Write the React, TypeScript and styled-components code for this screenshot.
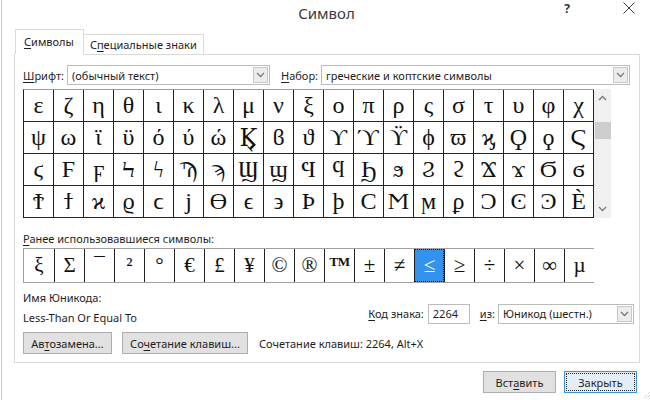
import styled, { createGlobalStyle } from 'styled-components';

const GlobalStyle = createGlobalStyle`
  html, body {
    margin: 0;
    padding: 0;
    background: #fff;
  }
  body {
    font-family: "Noto Sans", "Open Sans", sans-serif;
    font-size: 11px;
    color: #1e1e1e;
  }
  * {
    box-sizing: border-box;
  }
`;

const gridChars = Array.from({ length: 76 }, (_, i) => String.fromCodePoint(0x3b5 + i));
const recentChars = ['ξ', 'Σ', '¯', '²', '°', '€', '£', '¥', '©', '®', '™', '±', '≠', '≤', '≥', '÷', '×', '∞', 'µ'];
const SELECTED_RECENT = 13;

const Screen = styled.div`
  width: 650px;
  height: 400px;
  overflow: hidden;
  background: #fff;
`;

const Frame = styled.div`
  position: relative;
  width: 650px;
  height: 400px;
  margin-left: 1px;
  border-left: 1px solid #c9c9c9;
`;

const TitleBar = styled.div`
  display: grid;
  grid-template-columns: 1fr auto 1fr;
  height: 29px;
`;

const Title = styled.div`
  grid-column: 2;
  font-size: 15px;
  line-height: 26px;
  color: #3a3a3a;
`;

const WindowControls = styled.div`
  grid-column: 3;
  display: flex;
  justify-content: flex-end;
  align-items: flex-start;
  gap: 53px;
  padding: 2px 16px 0 0;
`;

const HelpMark = styled.span`
  font-size: 12px;
  font-weight: 700;
  color: #333;
  line-height: 14px;
`;

const TabStrip = styled.div`
  display: flex;
  align-items: flex-end;
  height: 25px;
  margin-left: 13px;
`;

const Tab = styled.div<{ $active?: boolean }>`
  position: relative;
  z-index: 1;
  display: flex;
  align-items: center;
  height: ${(p) => (p.$active ? '26px' : '20px')};
  margin-bottom: ${(p) => (p.$active ? '-1px' : '0')};
  padding: ${(p) => (p.$active ? '0 9px 2px 8px' : '0 6px 0 6px')};
  border: 1px solid #d9d9d9;
  border-bottom: ${(p) => (p.$active ? '1px solid #fff' : 'none')};
  border-left: ${(p) => (p.$active ? '1px solid #d9d9d9' : 'none')};
  background: #fff;
  color: #1e1e1e;
`;

const Key = styled.span`
  text-decoration: underline;
  text-underline-offset: 2px;
`;

const Panel = styled.div`
  margin-left: 12px;
  width: 626px;
  height: 309px;
  border: 1px solid #d9d9d9;
  padding: 10px 5px 0 8px;
`;

const FieldRow = styled.div`
  display: flex;
  align-items: center;
  height: 20px;
`;

const Label = styled.span<{ $gap?: number }>`
  margin-left: ${(p) => p.$gap ?? 0}px;
  margin-right: 3px;
  white-space: nowrap;
`;

const SelectBox = styled.div<{ $width: number }>`
  display: flex;
  align-items: center;
  justify-content: space-between;
  width: ${(p) => p.$width}px;
  height: 20px;
  border: 1px solid #bcbcbc;
  background: #fff;
  padding: 0 1px 0 4px;
  white-space: nowrap;
`;

const DropButton = styled.span`
  display: flex;
  align-items: center;
  justify-content: center;
  width: 15px;
  height: 16px;
  border: 1px solid #c9c9c9;
  background: #ececec;
`;

const CharArea = styled.div`
  display: flex;
  margin-top: 4px;
`;

const CharGrid = styled.div<{ $cols: number }>`
  display: grid;
  grid-template-columns: repeat(${(p) => p.$cols}, 30px);
  border-top: 1px solid #9a9a9a;
  border-left: 1px solid #222;
`;

const CharCell = styled.div`
  display: flex;
  align-items: center;
  justify-content: center;
  height: 32px;
  border-right: 1px solid #222;
  border-bottom: 1px solid #222;
  font-family: "Liberation Serif", "DejaVu Serif", serif;
  font-size: 24px;
  color: #111;
  background: #fff;
  overflow: hidden;
`;

const ScrollTrack = styled.div`
  display: flex;
  flex-direction: column;
  align-items: center;
  width: 17px;
  height: 129px;
  background: #f0f0f0;
  padding-top: 6px;
`;

const ScrollThumb = styled.div`
  width: 16px;
  height: 17px;
  margin-top: 21px;
  background: #cdcdcd;
`;

const ScrollSpacer = styled.div<{ $fixed?: number }>`
  flex: ${(p) => (p.$fixed ? `0 0 ${p.$fixed}px` : '1')};
`;

const SectionLabel = styled.div`
  margin-top: 13px;
  line-height: 16px;
`;

const RecentRow = styled.div`
  display: flex;
  margin-top: 1px;
  width: 571px;
  height: 35px;
  border: 1px solid #a0a0a0;
`;

const RecentCell = styled.div<{ $selected?: boolean; $first?: boolean }>`
  display: flex;
  align-items: center;
  justify-content: center;
  width: 30px;
  height: 33px;
  flex: 0 0 30px;
  border-left: ${(p) => (p.$first ? 'none' : '1px solid #222')};
  font-family: "Liberation Serif", "DejaVu Serif", serif;
  font-size: 21px;
  color: ${(p) => (p.$selected ? '#fff' : '#111')};
  background: ${(p) => (p.$selected ? '#3392ee' : '#fff')};
  outline: ${(p) => (p.$selected ? '1px dotted #1a1a1a' : 'none')};
  outline-offset: -1px;
`;

const TrademarkGlyph = styled.span`
  font-size: 13px;
  font-weight: 700;
  letter-spacing: -0.5px;
  margin-top: -8px;
`;

const InfoRow = styled.div`
  display: flex;
  justify-content: space-between;
  margin-top: 7px;
`;

const InfoText = styled.div`
  display: flex;
  flex-direction: column;
  gap: 4px;
  line-height: 16px;
`;

const CodeRow = styled.div`
  display: flex;
  align-items: center;
  margin-top: 11px;
`;

const CodeInput = styled.div`
  width: 42px;
  height: 20px;
  border: 1px solid #bcbcbc;
  padding-left: 4px;
  line-height: 18px;
  margin-left: 1px;
`;

const ButtonRow = styled.div`
  display: flex;
  align-items: center;
  gap: 10px;
  margin-top: 6px;
`;

const Button = styled.button<{ $width: number; $default?: boolean }>`
  width: ${(p) => p.$width}px;
  height: 22px;
  border: 1px solid ${(p) => (p.$default ? '#3c8fd8' : '#adadad')};
  background: ${(p) => (p.$default ? '#e5eef8' : '#e1e1e1')};
  font-family: inherit;
  font-size: 11px;
  color: #1e1e1e;
  padding: 0;
  outline: ${(p) => (p.$default ? '1px dotted #222' : 'none')};
  outline-offset: -3px;
`;

const ShortcutText = styled.span`
  margin-left: 1px;
`;

const Footer = styled.div`
  display: flex;
  justify-content: flex-end;
  gap: 8px;
  margin-top: 8px;
  padding-right: 14px;
`;

const Grip = styled.svg`
  position: absolute;
  right: 0;
  bottom: 0;
`;

function Chevron({ up }: { up?: boolean }) {
  return (
    <svg width="9" height="6" viewBox="0 0 9 6">
      <path
        d={up ? 'M1 5 L4.5 1.5 L8 5' : 'M1 1 L4.5 4.5 L8 1'}
        fill="none"
        stroke="#7a7a7a"
        strokeWidth="1.3"
      />
    </svg>
  );
}

function CloseIcon() {
  return (
    <svg width="12" height="12" viewBox="0 0 12 12">
      <path d="M0.5 0.5 L11.5 11.5 M11.5 0.5 L0.5 11.5" stroke="#3a3a3a" strokeWidth="1" />
    </svg>
  );
}

function Select({ width, children }: { width: number; children: React.ReactNode }) {
  return (
    <SelectBox $width={width}>
      <span>{children}</span>
      <DropButton>
        <Chevron />
      </DropButton>
    </SelectBox>
  );
}

export default function App() {
  return (
    <Screen>
      <GlobalStyle />
      <Frame>
        <TitleBar>
          <Title>Символ</Title>
          <WindowControls>
            <HelpMark>?</HelpMark>
            <CloseIcon />
          </WindowControls>
        </TitleBar>

        <TabStrip>
          <Tab $active>
            <Key>С</Key>имволы
          </Tab>
          <Tab>
            С<Key>п</Key>ециальные знаки
          </Tab>
        </TabStrip>

        <Panel>
          <FieldRow>
            <Label>
              <Key>Ш</Key>рифт:
            </Label>
            <Select width={203}>(обычный текст)</Select>
            <Label $gap={11}>
              <Key>Н</Key>абор:
            </Label>
            <Select width={309}>греческие и коптские символы</Select>
          </FieldRow>

          <CharArea>
            <CharGrid $cols={19}>
              {gridChars.map((c, i) => (
                <CharCell key={i}>{c}</CharCell>
              ))}
            </CharGrid>
            <ScrollTrack>
              <Chevron up />
              <ScrollThumb />
              <ScrollSpacer />
              <Chevron />
              <ScrollSpacer $fixed={6} />
            </ScrollTrack>
          </CharArea>

          <SectionLabel>
            <Key>Р</Key>анее использовавшиеся символы:
          </SectionLabel>
          <RecentRow>
            {recentChars.map((c, i) => (
              <RecentCell key={i} $first={i === 0} $selected={i === SELECTED_RECENT}>
                {c === '™' ? <TrademarkGlyph>TM</TrademarkGlyph> : c}
              </RecentCell>
            ))}
          </RecentRow>

          <InfoRow>
            <InfoText>
              <span>Имя Юникода:</span>
              <span>Less-Than Or Equal To</span>
            </InfoText>
            <CodeRow>
              <Label>
                <Key>К</Key>од знака:
              </Label>
              <CodeInput>2264</CodeInput>
              <Label $gap={10}>
                <Key>и</Key>з:
              </Label>
              <Select width={136}>Юникод (шестн.)</Select>
            </CodeRow>
          </InfoRow>

          <ButtonRow>
            <Button $width={89}>
              Ав<Key>т</Key>озамена...
            </Button>
            <Button $width={126}>
              Со<Key>ч</Key>етание клавиш...
            </Button>
            <ShortcutText>Сочетание клавиш: 2264, Alt+X</ShortcutText>
          </ButtonRow>
        </Panel>

        <Footer>
          <Button $width={73}>
            Вст<Key>а</Key>вить
          </Button>
          <Button $width={73} $default>
            Закрыть
          </Button>
        </Footer>

        <Grip width="11" height="11" viewBox="0 0 11 11">
          <path d="M10 3 L3 10 M10 6 L6 10 M10 9 L9 10" stroke="#b5b5b5" strokeWidth="1" strokeDasharray="1 1" />
        </Grip>
      </Frame>
    </Screen>
  );
}
